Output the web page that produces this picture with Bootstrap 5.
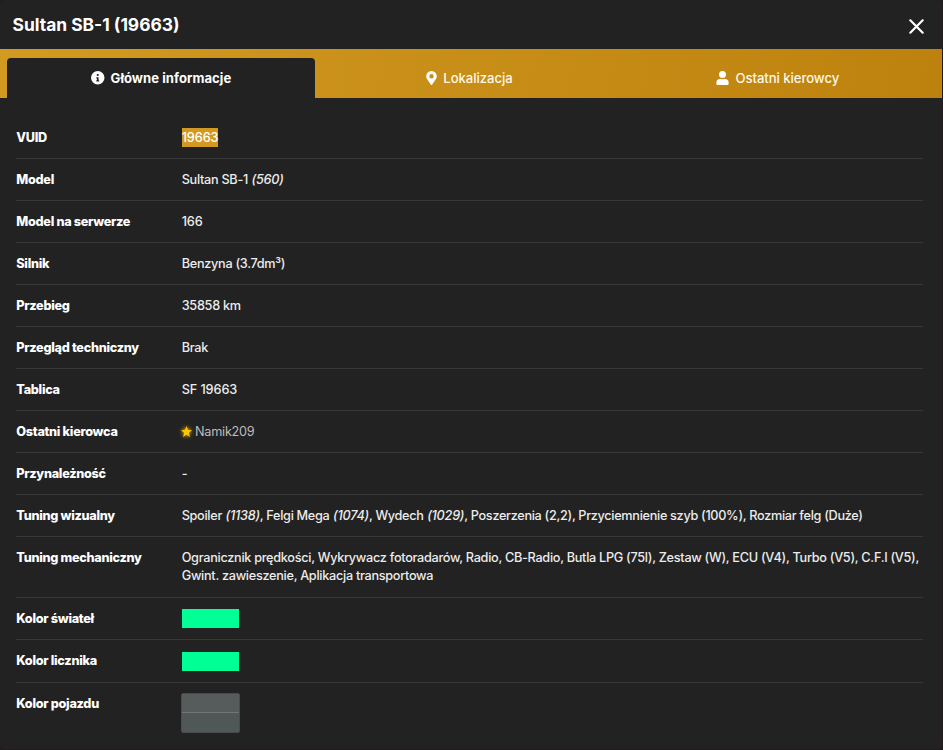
<!DOCTYPE html>
<html lang="pl" data-bs-theme="dark">
<head>
<meta charset="utf-8">
<meta name="viewport" content="width=device-width, initial-scale=1">
<title>Sultan SB-1 (19663)</title>
<link href="https://cdn.jsdelivr.net/npm/bootstrap@5.3.0/dist/css/bootstrap.min.css" rel="stylesheet">
<style>
body{background:#211a1e;font-family:Inter,"Noto Sans",sans-serif;font-size:12.7px;line-height:18px;color:#ececec;overflow:hidden}
.vehicle-panel{width:942px;height:749px;background:#222;border-radius:4px}
.panel-head{height:49px;padding:1px 17px 0 12.5px}
.panel-title{font-size:17.4px;font-weight:700;color:#fff;letter-spacing:0;padding-top:1px}
.close-btn{line-height:0;color:#fff;padding-top:3px!important}
.tab-strip{height:49px;padding:9px 10px 0 7px;background:linear-gradient(100deg,#d39a22,#bc820d)}
.tab-strip .nav-link{height:40px;padding:0;border-radius:4px 4px 0 0;color:#fff7e6;font-size:13.1px;font-weight:500;letter-spacing:-.04px}
.tab-strip .nav-link.active{background:#222;color:#fff;font-weight:700;letter-spacing:.04px}
.tab-strip .nav-link svg{margin-right:6px}
.details{padding:18.9px 19px 0 16.3px}
.detail{min-height:42.04px;padding-top:12px;border-bottom:1px solid #373737}
.detail:last-child{border-bottom:0}
.detail dt{flex:0 0 165.4px;font-weight:800;color:#fff;letter-spacing:-.3px}
.detail dd{font-weight:500;letter-spacing:-.29px}
.detail em{letter-spacing:-.25px;margin-left:.5px}
.detail .fittings{letter-spacing:-.31px}
.detail .plain-number{letter-spacing:-.1px}
.detail.two-line{min-height:60.6px}
.detail.swatch-row{min-height:42.5px}
.selected-text{background:#d39a22;color:#fff;padding:1.5px 0 2px;letter-spacing:-.1px}
.detail .driver{color:#bdbdbd;font-weight:400;letter-spacing:-.25px}
.star{filter:drop-shadow(0 0 2px #f5b800);margin:-3px -.5px 0 -.5px}
.swatch{width:57px;height:19px;background:#00ff94;margin-top:-.6px}
.paint{width:59px;height:40px;border:1px solid #484c4c;border-radius:2px;background:linear-gradient(#565c5b 0 18px,#707675 18px 19px,#505857 19px);margin:-2px 0 0 -.6px}
</style>
<script src="https://cdn.jsdelivr.net/npm/bootstrap@5.3.0/dist/js/bootstrap.bundle.min.js"></script>
</head>
<body>
<main class="vehicle-panel">
<header class="panel-head d-flex align-items-center justify-content-between">
<h1 class="panel-title mb-0">Sultan SB-1 (19663)</h1>
<button class="close-btn btn p-0 border-0" aria-label="Zamknij"><svg width="17" height="17" viewBox="0 0 17 17" fill="none" stroke="currentColor" stroke-width="2.2" stroke-linecap="round"><path d="M2.3 2.3l12.4 12.4M14.7 2.3L2.3 14.7"/></svg></button>
</header>
<nav class="tab-strip nav nav-justified">
<a class="nav-link active d-flex align-items-center justify-content-center" href="#"><svg width="13.5" height="13.5" viewBox="0 0 512 512" fill="currentColor"><path fill-rule="evenodd" d="M256 0a256 256 0 1 0 0 512 256 256 0 1 0 0-512zm0 110a42 42 0 1 1 0 84 42 42 0 1 1 0-84zm56 274q0 12-12 12h-88q-12 0-12-12v-24q0-12 12-12h12v-64h-12q-12 0-12-12v-24q0-12 12-12h64q12 0 12 12v100h12q12 0 12 12z"/></svg>Główne informacje</a>
<a class="nav-link d-flex align-items-center justify-content-center" href="#"><svg width="11" height="14" viewBox="0 0 384 512" fill="#fff"><path fill-rule="evenodd" d="M172 502C27 291 0 270 0 192a192 192 0 0 1 384 0c0 78-27 99-172 310-10 13-30 13-40 0zM192 272a80 80 0 1 0 0-160 80 80 0 0 0 0 160z"/></svg>Lokalizacja</a>
<a class="nav-link d-flex align-items-center justify-content-center" href="#"><svg width="13" height="14" viewBox="0 0 448 512" fill="#fff"><path d="M224 256a128 128 0 1 0 0-256 128 128 0 0 0 0 256zm90 32h-17a174 174 0 0 1-146 0h-17A134 134 0 0 0 0 422v42a48 48 0 0 0 48 48h352a48 48 0 0 0 48-48v-42a134 134 0 0 0-134-134z"/></svg>Ostatni kierowcy</a>
</nav>
<dl class="details mb-0">
<div class="detail d-flex"><dt>VUID</dt><dd class="mb-0"><span class="selected-text">19663</span></dd></div>
<div class="detail d-flex"><dt>Model</dt><dd class="mb-0">Sultan SB-1 <em>(560)</em></dd></div>
<div class="detail d-flex"><dt>Model na serwerze</dt><dd class="mb-0 plain-number">166</dd></div>
<div class="detail d-flex"><dt>Silnik</dt><dd class="mb-0">Benzyna (3.7dm³)</dd></div>
<div class="detail d-flex"><dt>Przebieg</dt><dd class="mb-0">35858 km</dd></div>
<div class="detail d-flex"><dt>Przegląd techniczny</dt><dd class="mb-0">Brak</dd></div>
<div class="detail d-flex"><dt>Tablica</dt><dd class="mb-0 plain-number">SF 19663</dd></div>
<div class="detail d-flex"><dt>Ostatni kierowca</dt><dd class="mb-0 driver"><svg class="star" width="11" height="11" viewBox="0 0 24 24" fill="#ffc400"><path d="M12 0l3.3 8.4 8.700.7-6.700 5.600L19.400 24 12 19.100 4.600 24l2.100-9.300L0 9.100l8.700-.7z"/></svg> Namik209</dd></div>
<div class="detail d-flex"><dt>Przynależność</dt><dd class="mb-0">-</dd></div>
<div class="detail d-flex"><dt>Tuning wizualny</dt><dd class="mb-0 fittings">Spoiler <em>(1138)</em>, Felgi Mega <em>(1074)</em>, Wydech <em>(1029)</em>, Poszerzenia (2,2), Przyciemnienie szyb (100%), Rozmiar felg (Duże)</dd></div>
<div class="detail two-line d-flex"><dt>Tuning mechaniczny</dt><dd class="mb-0 text-nowrap">Ogranicznik prędkości, Wykrywacz fotoradarów, Radio, CB-Radio, Butla LPG (75l), Zestaw (W), ECU (V4), Turbo (V5), C.F.I (V5),<br>Gwint. zawieszenie, Aplikacja transportowa</dd></div>
<div class="detail swatch-row d-flex"><dt>Kolor świateł</dt><dd class="swatch mb-0"></dd></div>
<div class="detail swatch-row d-flex"><dt>Kolor licznika</dt><dd class="swatch mb-0"></dd></div>
<div class="detail swatch-row d-flex"><dt>Kolor pojazdu</dt><dd class="paint mb-0"></dd></div>
</dl>
</main>
</body>
</html>
